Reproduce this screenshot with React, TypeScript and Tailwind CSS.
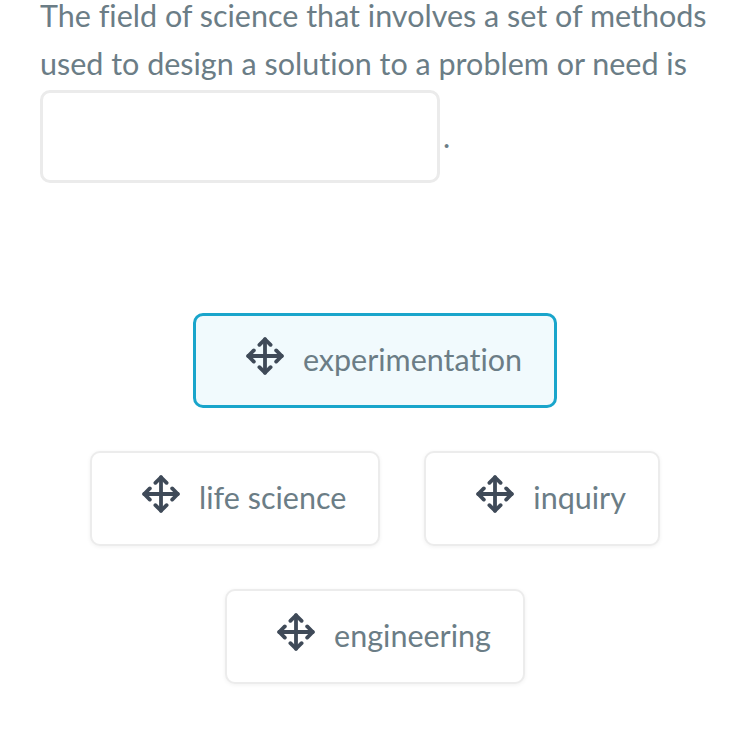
import type { ReactNode } from 'react'

const CHOICES_TOP = ['experimentation']
const CHOICES_MID = ['life science', 'inquiry']
const CHOICES_BOTTOM = ['engineering']

function MoveIcon() {
  return (
    <svg className="shrink-0 mb-[10px]" width="38" height="38" viewBox="1 1 34 34" fill="none" stroke="#3f4a58" strokeWidth="3.4" strokeLinecap="round" strokeLinejoin="round">
      <path d="M18 3v30M3 18h30" />
      <path d="M13 8L18 3l5 5" />
      <path d="M13 28L18 33l5-5" />
      <path d="M8 13L3 18l5 5" />
      <path d="M28 13L33 18l-5 5" />
    </svg>
  )
}

function Chip({ label, active }: { label: string; active?: boolean }) {
  return (
    <div
      className={
        active
          ? 'h-[95px] flex items-center gap-[19px] pl-[50px] pr-[32px] rounded-[10px] border-[3px] border-[#19a5cb] bg-[#f1fafd]'
          : 'h-[95px] flex items-center gap-[19px] pl-[50px] pr-[32px] rounded-[10px] border-[2px] border-[#ececec] bg-white shadow-[0_1px_4px_rgba(0,0,0,0.06)]'
      }
    >
      <MoveIcon />
      <span className="text-[30.5px] text-[#6b7d86] pb-[2px]">{label}</span>
    </div>
  )
}

function Row({ children }: { children: ReactNode }) {
  return <div className="flex justify-center gap-[44px]">{children}</div>
}

export default function App() {
  return (
    <div className="w-[750px] h-[750px] bg-white overflow-hidden" style={{ fontFamily: 'Lato, "Open Sans", sans-serif', fontVariantLigatures: 'none' }}>
      <div className="pl-[40px] pr-[20px] -mt-[9px]">
        <p className="text-[30.5px] leading-[48px] text-[#6b7d86]">
          The field of science that involves a set of methods used to design a solution to a problem or need is
        </p>
        <div className="flex items-end gap-[3px] mt-[3px]">
          <div className="w-[400px] h-[93px] rounded-[10px] border-[3px] border-[#ebebeb] bg-white" />
          <span className="text-[30.5px] text-[#6b7d86] leading-none mb-[32px]">.</span>
        </div>
      </div>

      <div className="flex flex-col gap-[43px] mt-[130px]">
        <Row>
          {CHOICES_TOP.map((c) => (
            <Chip key={c} label={c} active />
          ))}
        </Row>
        <Row>
          {CHOICES_MID.map((c) => (
            <Chip key={c} label={c} />
          ))}
        </Row>
        <Row>
          {CHOICES_BOTTOM.map((c) => (
            <Chip key={c} label={c} />
          ))}
        </Row>
      </div>
    </div>
  )
}
